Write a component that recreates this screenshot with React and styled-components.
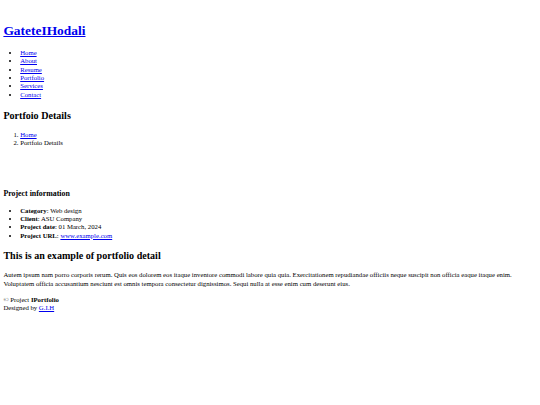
import React from "react";
import styled, { createGlobalStyle } from "styled-components";

const GlobalStyle = createGlobalStyle`
  html, body {
    margin: 0;
    padding: 0;
    background: #ffffff;
  }
  body {
    font-family: "Liberation Serif", "Times New Roman", serif;
    font-size: 6.72px;
    line-height: 8.4px;
    color: #000000;
  }
  a {
    color: #0000ee;
    text-decoration: underline;
  }
`;

const Page = styled.div`
  padding: 0 3.4px;
`;

const Header = styled.header`
  padding-top: 21.5px;
`;

const Logo = styled.h1`
  margin: 0;
  font-size: 13.44px;
  line-height: 17px;
  font-weight: bold;
`;

const BulletList = styled.ul`
  margin: ${(p) => p.$top || 0}px 0 0;
  padding-left: 16.8px;
  list-style: disc;
`;

const NumberList = styled.ol`
  margin: ${(p) => p.$top || 0}px 0 0;
  padding-left: 16.8px;
`;

const Item = styled.li`
  line-height: 8.4px;
`;

const Title = styled.h2`
  margin: ${(p) => p.$top || 0}px 0 0;
  font-size: 10.08px;
  line-height: 11.6px;
  font-weight: bold;
`;

const SubTitle = styled.h3`
  margin: ${(p) => p.$top || 0}px 0 0;
  font-size: 7.87px;
  line-height: 9.6px;
  font-weight: bold;
`;

const Slider = styled.div`
  height: 41px;
`;

const Text = styled.p`
  margin: 9.8px 0 0;
  line-height: 8.4px;
`;

const Footer = styled.footer`
  margin-top: 7.6px;
  line-height: 8.4px;
`;

const navLinks = ["Home", "About", "Resume", "Portfolio", "Services", "Contact"];

const info = [
  { label: "Category", value: "Web design" },
  { label: "Client", value: "ASU Company" },
  { label: "Project date", value: "01 March, 2024" },
  { label: "Project URL", value: "www.example.com", link: true },
];

export default function App() {
  return (
    <>
      <GlobalStyle />
      <Page>
        <Header>
          <Logo>
            <a href="#">GateteIHodali</a>
          </Logo>
          <nav>
            <BulletList $top={10.3}>
              {navLinks.map((name) => (
                <Item key={name}>
                  <a href="#">{name}</a>
                </Item>
              ))}
            </BulletList>
          </nav>
        </Header>
        <main>
          <Title $top={10.4}>Portfoio Details</Title>
          <nav>
            <NumberList $top={9.6}>
              <Item>
                <a href="#">Home</a>
              </Item>
              <Item>Portfoio Details</Item>
            </NumberList>
          </nav>
          <Slider />
          <SubTitle>Project information</SubTitle>
          <BulletList $top={8.4}>
            {info.map((row) => (
              <Item key={row.label}>
                <strong>{row.label}</strong>:{" "}
                {row.link ? <a href="#">{row.value}</a> : row.value}
              </Item>
            ))}
          </BulletList>
          <Title $top={9.8}>This is an example of portfolio detail</Title>
          <Text>
            Autem ipsum nam porro corporis rerum. Quis eos dolorem eos itaque
            inventore commodi labore quia quia. Exercitationem repudiandae
            officiis neque suscipit non officia eaque itaque enim. Voluptatem
            officia accusantium nesciunt est omnis tempora consectetur
            dignissimos. Sequi nulla at esse enim cum deserunt eius.
          </Text>
        </main>
        <Footer>
          <div>
            © Project <strong>IPortfolio</strong>
          </div>
          <div>
            Designed by <a href="#">G.I.H</a>
          </div>
        </Footer>
      </Page>
    </>
  );
}
